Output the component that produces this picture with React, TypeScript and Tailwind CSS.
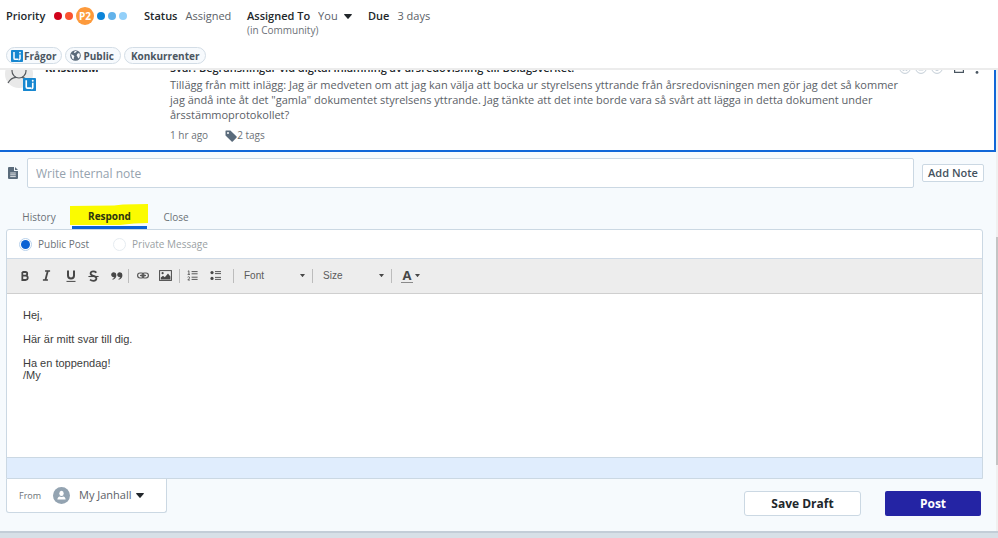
import type { ReactNode } from "react";

const DRAFT = `Hej,

Här är mitt svar till dig.

Ha en toppendag!
/My`;

function Caret({ className = "" }: { className?: string }) {
  return (
    <svg viewBox="0 0 8 5" className={`pointer-events-none ${className}`} aria-hidden="true">
      <path d="M0.3 0H7.7Q8 0.5 7.6 1L4.6 4.6Q4 5.2 3.4 4.6L0.4 1Q0 0.5 0.3 0Z" fill="currentColor" />
    </svg>
  );
}

function LithiumLogo({ className = "" }: { className?: string }) {
  return (
    <svg viewBox="0 0 12 12" className={className} aria-hidden="true">
      <rect width="12" height="12" rx="0.8" fill="#1787d0" />
      <path d="M3 2V8.2Q3 9.3 4.1 9.3H7.4" fill="none" stroke="#fff" strokeWidth="1.5" />
      <path d="M9 4.4V8.6Q9 9.8 7.6 9.6" fill="none" stroke="#fff" strokeWidth="1.5" />
      <circle cx="9" cy="2.6" r="0.9" fill="#fff" />
    </svg>
  );
}

function Globe() {
  return (
    <svg viewBox="0 0 12 12" className="size-[11px]" aria-hidden="true">
      <circle cx="6" cy="6" r="5.8" fill="#5a6b7b" />
      <path d="M5.4 1.2L7.4 1L6.6 2.4L5 3.4L4.2 2.6Z" fill="#f7fafd" />
      <path d="M1 4.6L3.4 5.4L4.8 6.8L4.2 8.2L4 10.4L2.4 9.2L1.8 7Z" fill="#f7fafd" />
      <path d="M8 4L10 3.4L10.8 5.2L10.4 7.8L9 9.2L8.2 7.4L7.2 6Z" fill="#f7fafd" />
    </svg>
  );
}

function Chip({ children }: { children: ReactNode }) {
  return (
    <a
      href="#tag"
      className="flex h-[17px] items-center rounded-full border border-[#d3dde6] bg-[#f7fafd] text-[10px] leading-[14px] font-bold text-[#4a5661]"
    >
      {children}
    </a>
  );
}

function TopBar() {
  return (
    <header className="flex h-[70px] flex-col border-b-2 border-[#ececec] bg-white">
      <div className="flex h-[46px] items-start pt-2 leading-4">
        <div className="flex w-[138px] items-center pl-[6px]">
          <span className="w-[48px] font-semibold text-[#22272b]">Priority</span>
          <span className="flex h-4 items-center gap-[3px]">
            <i className="size-2 rounded-full bg-[#d0021b]" />
            <i className="size-2 rounded-full bg-[#fa5330]" />
            <b className="flex size-[18px] items-center justify-center rounded-full bg-[#fd9a3c] text-[10px] font-bold text-white">
              P2
            </b>
            <i className="size-2 rounded-full bg-[#0b84d9]" />
            <i className="size-2 rounded-full bg-[#62b2ea]" />
            <i className="size-2 rounded-full bg-[#93d0f9]" />
          </span>
        </div>
        <div className="flex w-[109px] gap-2 pl-[6px]">
          <span className="font-semibold text-[#22272b]">Status</span>
          <span className="text-[#5b6167]">Assigned</span>
        </div>
        <div className="w-[121px]">
          <div className="flex items-center gap-2">
            <label htmlFor="assignee" className="font-semibold text-[#22272b]">
              Assigned To
            </label>
            <span className="grid items-center">
              <select id="assignee" className="col-start-1 row-start-1 w-[34px] appearance-none text-[#5b6167]">
                <option>You</option>
              </select>
              <Caret className="col-start-1 row-start-1 h-[5px] w-2 justify-self-end text-[#22272b]" />
            </span>
          </div>
          <p className="text-[10px] leading-3 text-[#6b7177]">(in Community)</p>
        </div>
        <div className="flex gap-2">
          <span className="font-semibold text-[#22272b]">Due</span>
          <span className="text-[#5b6167]">3 days</span>
        </div>
      </div>
      <div className="flex gap-[3px] pt-[1px] pl-[6px]">
        <Chip>
          <span className="flex items-center gap-[1px] pr-[5px] pl-1">
            <LithiumLogo className="size-3" />
            Frågor
          </span>
        </Chip>
        <Chip>
          <span className="flex items-center gap-[2px] pr-[6px] pl-1">
            <Globe />
            Public
          </span>
        </Chip>
        <Chip>
          <span className="px-[6px]">Konkurrenter</span>
        </Chip>
      </div>
    </header>
  );
}

function Face({ mouth }: { mouth: string }) {
  return (
    <svg viewBox="0 0 12 12" className="size-3" fill="none" stroke="#c3cdd6" aria-hidden="true">
      <circle cx="6" cy="6" r="5.4" />
      <path d={mouth} />
      <path d="M4 4V5M8 4V5" />
    </svg>
  );
}

function Message() {
  return (
    <article className="flex h-[82px] flex-col justify-end overflow-hidden border-r-2 border-b-2 border-[#1167d8] bg-white">
      <div className="flex h-[90px] shrink-0 items-start pr-[15px]">
        <div className="flex w-[170px] shrink-0 gap-[12px] pl-[5px] leading-4">
          <div className="relative h-8 w-7">
            <svg viewBox="0 0 28 28" className="size-7" aria-hidden="true">
              <circle cx="14" cy="14" r="14" fill="#e9e9e9" />
              <circle cx="14" cy="11" r="7" fill="none" stroke="#55595d" strokeWidth="1.2" />
              <path d="M3 23Q6 17.6 11 17.4M17 17.4Q21 18 24 22" fill="none" stroke="#55595d" strokeWidth="1.2" />
            </svg>
            <LithiumLogo className="absolute top-[18px] left-[18px] size-[13px]" />
          </div>
          <span className="font-bold text-[#22272b]">KristinaM</span>
        </div>
        <div className="min-w-0 flex-1">
          <div className="flex h-[17px] items-start justify-between">
            <h2 className="leading-4 font-semibold text-[#22272b]">
              Svar: Begränsningar vid digital inlämning av årsredovisning till Bolagsverket.
            </h2>
            <div className="flex h-4 items-center text-[#4a5661]">
              <div className="flex gap-1 pr-[11px]">
                <Face mouth="M3.6 8.8Q6 6.4 8.4 8.8" />
                <Face mouth="M3.6 8H8.4" />
                <Face mouth="M3.6 7.4Q6 9.8 8.4 7.4" />
              </div>
              <svg viewBox="0 0 10 10" className="mr-[11px] size-[10px]" fill="none" stroke="currentColor" aria-hidden="true">
                <path d="M5 1H0.6V9.4H9.4V5M4 6L9 1M6 0.6H9.4V4" strokeWidth="1.2" />
              </svg>
              <svg viewBox="0 0 4 12" className="h-3 w-1" fill="currentColor" aria-hidden="true">
                <circle cx="2" cy="1.6" r="1.4" />
                <circle cx="2" cy="6" r="1.4" />
                <circle cx="2" cy="10.4" r="1.4" />
              </svg>
            </div>
          </div>
          <p className="max-w-[740px] leading-[15px] text-[#5b6167]">
            Tillägg från mitt inlägg: Jag är medveten om att jag kan välja att bocka ur styrelsens yttrande från
            årsredovisningen men gör jag det så kommer jag ändå inte åt det "gamla" dokumentet styrelsens yttrande. Jag
            tänkte att det inte borde vara så svårt att lägga in detta dokument under årsstämmoprotokollet?
          </p>
          <div className="flex h-[23px] items-center gap-[17px] pt-1 text-[10px] text-[#6b7177]">
            <span>1 hr ago</span>
            <span className="flex items-center">
              <svg viewBox="0 0 12 12" className="size-3" aria-hidden="true">
                <path
                  fillRule="evenodd"
                  d="M1 0.5H5.4L11.6 6.4Q12 7 11.6 7.6L7.8 11.5Q7.2 12 6.6 11.5L0.5 5.6V1Q0.5 0.5 1 0.5ZM3 2A1 1 0 1 0 3 4A1 1 0 1 0 3 2Z"
                  fill="#5a6b7b"
                />
              </svg>
              2 tags
            </span>
          </div>
        </div>
      </div>
    </article>
  );
}

function NoteRow() {
  return (
    <form className="flex items-center pr-[12px] pl-[8px]">
      <svg viewBox="0 0 10 12" className="mr-[9px] h-3 w-[10px] shrink-0" aria-hidden="true">
        <path d="M1 0H6V4H10V11Q10 12 9 12H1Q0 12 0 11V1Q0 0 1 0Z" fill="#5a6b7b" />
        <path d="M7 0L10 3H7Z" fill="#5a6b7b" />
        <path d="M2.2 6H7.8M2.2 7.8H7.8M2.2 9.6H7.8" stroke="#fff" strokeWidth="0.8" />
      </svg>
      <input
        aria-label="Write internal note"
        placeholder="Write internal note"
        className="h-[30px] min-w-0 flex-1 rounded-[2px] border border-[#cbd8e3] bg-white px-2 text-xs outline-none placeholder:text-[#95a2ae]"
      />
      <button
        type="button"
        className="ml-[8px] h-[18px] w-[62px] rounded-[2px] border border-[#cbd8e3] bg-white leading-4 font-semibold text-[#45525e]"
      >
        Add Note
      </button>
    </form>
  );
}

function Tabs() {
  return (
    <nav className="mt-[15px] flex h-[26px] items-stretch text-[10px] text-[#6b7177]" role="tablist">
      <button role="tab" className="w-[66px] pt-[2px] pl-[12px]">
        History
      </button>
      <button
        role="tab"
        aria-selected="true"
        className="relative ml-[6px] w-[75px] border-b-[3px] border-[#0d63d6] pt-[4px] font-bold text-[#2c3410]"
      >
        <svg
          viewBox="0 0 78 21"
          className="absolute top-px -left-[2px] h-[21px] w-[78px]"
          preserveAspectRatio="none"
          aria-hidden="true"
        >
          <path d="M0 2L44 1.5L53 0.5L78 0V19L64 19.5L50 21H0Z" fill="#fbfb00" />
        </svg>
        <span className="relative">Respond</span>
      </button>
      <button role="tab" className="w-[58px] pt-[2px]">
        Close
      </button>
    </nav>
  );
}

function ModeChoice() {
  return (
    <div className="flex h-[29px] items-center gap-[24px] border-b border-[#cfdae6] pl-[12px] text-[10px]">
      <label className="flex items-center gap-[6px] text-[#6b7177]">
        <input
          type="radio"
          name="mode"
          defaultChecked
          className="size-[13px] appearance-none rounded-full border border-[#b9d2ec] bg-white p-px checked:bg-[#0b62d4] checked:bg-clip-content"
        />
        Public Post
      </label>
      <label className="flex items-center gap-[6px] text-[#9a9fa4]">
        <input
          type="radio"
          name="mode"
          disabled
          className="size-[13px] appearance-none rounded-full border border-[#e6ecf1] bg-white"
        />
        Private Message
      </label>
    </div>
  );
}

function Tool({ label, children }: { label: string; children: ReactNode }) {
  return (
    <button
      type="button"
      aria-label={label}
      className="flex h-[18px] w-[23px] items-center justify-center text-[#474747]"
    >
      {children}
    </button>
  );
}

function Divider() {
  return <span className="h-[14px] w-px shrink-0 bg-[#bcbcbc]" />;
}

function ToolSelect({ label }: { label: string }) {
  return (
    <span className="grid w-[78px] items-center pr-[7px] pl-[10px]">
      <select
        aria-label={label}
        className="col-start-1 row-start-1 w-full appearance-none font-['Liberation_Sans',Arial,sans-serif] text-[10px] leading-4 text-[#5a5a5a]"
      >
        <option>{label}</option>
      </select>
      <Caret className="col-start-1 row-start-1 h-[3px] w-[5px] justify-self-end text-[#474747]" />
    </span>
  );
}

function Toolbar() {
  return (
    <div className="flex h-[35px] items-center border-b border-[#cfcfcf] bg-[#ededed] pb-px pl-[6px]">
      <Tool label="Bold">
        <svg viewBox="0 0 9 11" className="h-[10px] w-2" fill="none" stroke="#474747" aria-hidden="true">
          <path d="M1.5 1H5Q7 1 7 3.1Q7 5.2 5 5.2H1.5M5 5.2Q7.6 5.3 7.6 7.6Q7.6 10 5 10H1.5V1" strokeWidth="2" />
        </svg>
      </Tool>
      <Tool label="Italic">
        <svg viewBox="0 0 10 12" className="mr-[3px] h-[11px] w-[9px]" fill="none" stroke="#474747" aria-hidden="true">
          <path d="M3.4 1H9M1 11H6.6" strokeWidth="1.6" />
          <path d="M6.4 1L3.8 11" strokeWidth="2" />
        </svg>
      </Tool>
      <Tool label="Underline">
        <svg viewBox="0 0 10 12" className="h-3 w-[10px]" fill="none" stroke="#474747" aria-hidden="true">
          <path d="M2 0.5V5.5Q2 8.4 5 8.4Q8 8.4 8 5.5V0.5" strokeWidth="2" />
          <path d="M0.5 11.4H9.5" strokeWidth="1" />
        </svg>
      </Tool>
      <Tool label="Strikethrough">
        <svg viewBox="0 0 11 12" className="h-3 w-[11px]" fill="none" stroke="#474747" aria-hidden="true">
          <path d="M8.4 2.6Q7 1.4 5.2 1.4Q2.6 1.4 2.6 3.4Q2.6 5 5.4 5.8Q8.4 6.6 8.4 8.6Q8.4 10.8 5.4 10.8Q3.4 10.8 2 9.6" strokeWidth="1.8" />
          <path d="M0.4 6.5H10.6" strokeWidth="1.1" />
        </svg>
      </Tool>
      <Tool label="Quote">
        <svg viewBox="0 0 13 9" className="h-2 w-3" fill="#474747" aria-hidden="true">
          <path d="M3 0.4A2.7 2.7 0 1 0 3.6 5.6Q3.2 7 1.2 8L1.8 8.8Q5.8 7.4 5.8 3.4Q5.8 0.6 3 0.4Z" />
          <path d="M9.8 0.4A2.7 2.7 0 1 0 10.4 5.6Q10 7 8 8L8.6 8.8Q12.6 7.4 12.6 3.4Q12.6 0.6 9.8 0.4Z" />
        </svg>
      </Tool>
      <Divider />
      <span className="w-[2px]" />
      <Tool label="Link">
        <svg viewBox="0 0 12 7" className="h-[7px] w-3" fill="none" stroke="#585858" aria-hidden="true">
          <rect x="0.6" y="1" width="6.4" height="5" rx="2.4" strokeWidth="1.2" />
          <rect x="5" y="1" width="6.4" height="5" rx="2.4" strokeWidth="1.2" />
          <path d="M3 3.5H9" strokeWidth="1.2" />
        </svg>
      </Tool>
      <Tool label="Image">
        <svg viewBox="0 0 13 11" className="h-[11px] w-[13px]" aria-hidden="true">
          <rect x="0.6" y="0.6" width="11.8" height="9.8" fill="none" stroke="#474747" />
          <path d="M1.8 9.4V7.6L4 5.8L5.8 7.2L9 3.6L11.4 6.4V9.4Z" fill="#474747" />
          <circle cx="3.6" cy="3.2" r="1.1" fill="#474747" />
        </svg>
      </Tool>
      <span className="w-[2px]" />
      <Divider />
      <span className="w-px" />
      <Tool label="Numbered list">
        <svg viewBox="0 0 11 11" className="size-[11px]" fill="none" stroke="#474747" aria-hidden="true">
          <path d="M0.8 1.4L1.9 0.8V4.4M0.6 4.4H3M0.6 7.2Q1.8 6.2 2.6 7.2Q3 8 0.8 10H3" strokeWidth="0.8" />
          <path d="M4.6 1.6H10.6M4.6 3.8H10.6M4.6 7.2H10.6M4.6 9.4H10.6" strokeWidth="0.9" />
        </svg>
      </Tool>
      <Tool label="Bulleted list">
        <svg viewBox="0 0 11 11" className="size-[11px]" fill="none" stroke="#474747" aria-hidden="true">
          <circle cx="2" cy="2.6" r="1.6" fill="#474747" stroke="none" />
          <circle cx="2" cy="8.4" r="1.6" fill="#474747" stroke="none" />
          <path d="M5 1.6H11M5 3.6H11M5 7.4H11M5 9.4H11" strokeWidth="0.9" />
        </svg>
      </Tool>
      <span className="w-[6px]" />
      <Divider />
      <ToolSelect label="Font" />
      <Divider />
      <ToolSelect label="Size" />
      <Divider />
      <button type="button" aria-label="Text colour" className="flex items-center gap-[2px] pl-[9px] text-[#474747]">
        <span className="flex h-[14px] w-3 items-center justify-center border-b border-[#8a8a8a] text-[13px] leading-3 font-bold">
          A
        </span>
        <Caret className="h-[3px] w-[5px]" />
      </button>
    </div>
  );
}

function Composer() {
  return (
    <section className="flex-1 bg-[#f6fafd] pt-[6px]">
      <NoteRow />
      <Tabs />
      <div className="mr-[13px] ml-[6px] rounded-t-[3px] border border-[#cbd8e3] bg-white">
        <ModeChoice />
        <Toolbar />
        <textarea
          aria-label="Response"
          defaultValue={DRAFT}
          className="block h-[163px] w-full resize-none px-4 pt-[15px] font-['Liberation_Sans',Arial,sans-serif] text-[11px] leading-3 text-[#3c3c3c] outline-none"
        />
        <div className="h-[21px] border-t border-[#cbd8e3] bg-[#e0edfd]" />
      </div>
      <footer className="flex items-start pl-[6px]">
        <div className="flex h-[34px] w-[161px] items-center rounded-b-[3px] border border-t-0 border-[#cbd8e3] bg-white pl-3">
          <label htmlFor="sender" className="w-[34px] text-[9px] text-[#6b7177]">
            From
          </label>
          <svg viewBox="0 0 17 17" className="size-[17px]" aria-hidden="true">
            <circle cx="8.5" cy="8.5" r="8.5" fill="#93a3b1" />
            <ellipse cx="8.5" cy="6.4" rx="2.2" ry="2.6" fill="#fff" />
            <path d="M4.4 12.6Q4.4 9.8 7 9.4Q8.5 10.6 10 9.4Q12.6 9.8 12.6 12.6Z" fill="#fff" />
          </svg>
          <span className="ml-[9px] grid items-center">
            <select id="sender" className="col-start-1 row-start-1 w-[65px] appearance-none text-[#5b6167]">
              <option>My Janhall</option>
            </select>
            <Caret className="col-start-1 row-start-1 h-[5px] w-2 justify-self-end text-[#22272b]" />
          </span>
        </div>
        <div className="mt-3 mr-[15px] ml-auto flex gap-[24px] text-xs font-bold">
          <button type="button" className="h-[25px] w-[117px] rounded-[3px] border border-[#cbd8e3] bg-white text-[#22272b]">
            Save Draft
          </button>
          <button type="submit" className="h-[25px] w-24 rounded-[2px] bg-[#2424a4] text-white">
            Post
          </button>
        </div>
      </footer>
    </section>
  );
}

export default function App() {
  return (
    <div className="flex min-h-screen flex-col bg-white font-['Open_Sans','Noto_Sans',sans-serif] text-[11px]">
      <TopBar />
      <main className="flex flex-1">
        <div className="flex min-w-0 flex-1 flex-col">
          <Message />
          <Composer />
        </div>
        <div className="flex w-[2px] flex-col bg-[#f0f0f0]">
          <div className="mt-[167px] h-[228px] bg-[#c4c4c4]" />
        </div>
      </main>
      <div className="h-[7px] border-t-2 border-[#c3cdd7] bg-[#d7e0e7]" />
    </div>
  );
}
